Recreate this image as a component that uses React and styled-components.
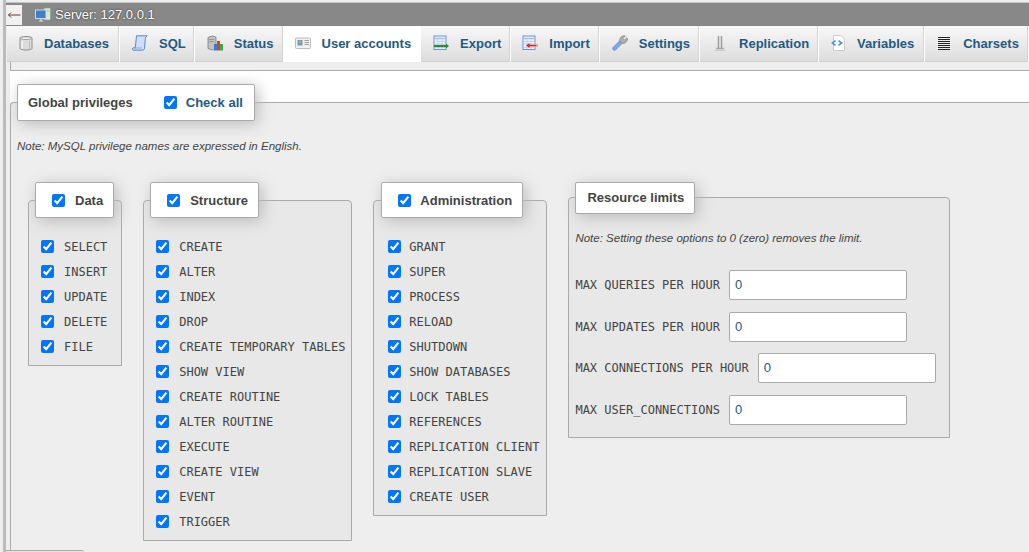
import React from "react";
import styled, { createGlobalStyle } from "styled-components";

const Global = createGlobalStyle`
  html, body { margin: 0; padding: 0; background: #eee; }
  body { font-family: "Liberation Sans", Arial, sans-serif; font-size: 13px; color: #444; overflow: hidden; }
  * { box-sizing: border-box; }
`;

const Page = styled.div`
  margin-left: 3px;
  border-left: 3px solid #bbb;
  height: 552px;
  overflow: hidden;
  padding-top: 3px;
  background: #eee;
`;

const ServerBar = styled.div`
  height: 23px;
  background: #888;
  box-shadow: 0 -1px 0 #c4c4c4;
  display: flex;
  align-items: center;
  color: #fff;
  font-size: 13px;
  text-shadow: 0 0 2px #222;
`;

const BackButton = styled.div`
  display: flex;
  align-items: center;
  justify-content: center;
  width: 16px;
  height: 20px;
  background: #f0f0f0;
  margin-right: 13px;
`;

const ServerLabel = styled.span`
  margin-left: 4px;
`;

const TabBar = styled.nav`
  height: 36px;
  display: flex;
  padding-left: 1px;
  background: #eee;
`;

const Tab = styled.a`
  display: flex;
  align-items: center;
  height: 36px;
  gap: 11px;
  padding: 0 ${p => p.$pr}px 2px ${p => p.$pl}px;
  font-weight: bold;
  font-size: 13px;
  color: #235a81;
  border-right: 1px solid #fff;
  flex: ${p => (p.$last ? "1" : "0 0 auto")};
  white-space: nowrap;
  background: ${p => (p.$active ? "#fff" : "linear-gradient(#f8f8f8, #dcdcdc)")};
  box-shadow: ${p => (p.$active ? "none" : "inset -1px 0 0 #d4d4d4, inset 0 -1px 0 #d0d0d0")};
`;

const Content = styled.div`
  padding-left: 4px;
`;

const TabStrip = styled.div`
  height: 9px;
  border-left: 1px solid #aaa;
  border-bottom: 1px solid #aaa;
`;

const WhiteBand = styled.div`
  height: 31px;
  background: #fff;
`;

const MainFieldset = styled.section`
  height: 448px;
  border-top: 1px solid #aaa;
  border-left: 1px solid #aaa;
  border-top-left-radius: 4px;
  background: #eee;
  padding-left: 6px;
`;

const LegendBox = styled.div`
  display: flex;
  width: fit-content;
  align-items: center;
  background: #fff;
  border: 1px solid #aaa;
  border-radius: 2px;
  box-shadow: 3px 3px 15px #bbb;
  font-weight: bold;
  font-size: 13px;
  color: #444;
  white-space: nowrap;
`;

const MainLegend = styled(LegendBox)`
  height: 37px;
  margin-top: -19px;
  padding: 0 11px 0 10px;
`;

const CheckAll = styled.label`
  display: flex;
  align-items: center;
  gap: 9px;
  margin-left: 31px;
  color: #235a81;
`;

const Check = styled.input.attrs({ type: "checkbox", defaultChecked: true })`
  width: 13px;
  height: 13px;
  margin: 0;
  flex: none;
`;

const Note = styled.p`
  margin: ${p => p.$top}px 0 0;
  font-style: italic;
  font-size: 11.5px;
  line-height: 13px;
  color: #444;
  white-space: nowrap;
`;

const Groups = styled.div`
  display: flex;
  align-items: flex-start;
  gap: 21px;
  margin: 47px 0 0 11px;
`;

const Group = styled.div`
  border: 1px solid #aaa;
  border-radius: 4px 4px 0 0;
  background: #e8e8e8;
  display: flex;
  flex-direction: column;
  align-items: flex-start;
  padding: 0 ${p => (p.$wide ? 7 : 6)}px 6px ${p => (p.$wide ? 14 : 12)}px;
`;

const GroupLegend = styled(LegendBox)`
  height: 36px;
  margin: -19px 1px 16px ${p => (p.$wide ? -7 : -6)}px;
  padding: 0 10px 0 16px;
  gap: ${p => (p.$wide ? 9 : 10)}px;
`;

const Row = styled.label`
  display: flex;
  align-items: center;
  height: 25px;
  gap: ${p => (p.$wide ? 8 : 10)}px;
  font-family: "DejaVu Sans Mono", monospace;
  font-size: 12px;
  color: #444;
  white-space: nowrap;
`;

const ResourceBox = styled.div`
  width: 382px;
  height: 241px;
  margin-top: -3px;
  border: 1px solid #aaa;
  border-radius: 4px 4px 0 0;
  background: #e8e8e8;
  padding: 0 6px 0 7px;
`;

const ResourceLegend = styled(LegendBox)`
  height: 32px;
  margin: -16px 0 0 -1px;
  padding: 0 10px 1px 11px;
`;

const Limits = styled.div`
  display: flex;
  flex-direction: column;
  gap: 11.67px;
  margin-top: 25px;
`;

const LimitRow = styled.label`
  display: flex;
  align-items: center;
  gap: 9px;
  height: 30px;
  font-family: "DejaVu Sans Mono", monospace;
  font-size: 12px;
  color: #444;
  white-space: nowrap;
  margin-left: -1px;
`;

const ResourceNote = styled(Note)`
  margin-left: -1px;
`;

const NumberInput = styled.input.attrs({ type: "text", defaultValue: "0" })`
  width: 178px;
  height: 30px;
  border: 1px solid #aaa;
  border-radius: 2px;
  background: #fff;
  padding: 0 5px 1px;
  font-family: "Liberation Sans", Arial, sans-serif;
  font-size: 13px;
  color: #235a81;
  outline: none;
`;

const FooterTab = styled.div`
  width: 78px;
  height: 8px;
  margin-left: -4px;
  border-top: 1px solid #aaa;
  border-right: 1px solid #ccc;
  border-top-right-radius: 2px;
  background: #e4e4e4;
`;

const Ico = styled.svg`
  width: 16px;
  height: 16px;
  flex: none;
  display: block;
`;

const icons = {
  db: (
    <>
      <path d="M3 3C3 1 15 1 15 3V13.500C15 15.500 3 15.500 3 13.500Z" fill="#dcdcdc" stroke="#8e8e8e" />
      <path d="M3 3c0 2 12 2 12 0" fill="#f2f2f2" stroke="#a0a0a0" />
      <path d="M5 6v7.500" stroke="#f4f4f4" strokeWidth="1.500" />
      <path d="M12.500 6v8" stroke="#c0c0c0" />
    </>
  ),
  sql: (
    <>
      <path d="M4.500 .8H15.200L13.500 2.500 12.500 13c-.2 1.500-1 2.200-2 2.200H1.500c-1.200 0-1.400-2-.3-2.400H3.300Z" fill="#cfe0f6" stroke="#4a7cc0" strokeWidth=".9" />
      <path d="M2 13h7.800" stroke="#7ea6dc" />
    </>
  ),
  status: (
    <>
      <path d="M1 2.500 5.500 .8 9 2.200v11.500L5.500 15 1 13.500Z" fill="#c2c2c2" stroke="#7c7c7c" strokeWidth=".8" />
      <path d="M2 4.500h5M2 6.500h5" stroke="#8c8c8c" strokeWidth=".8" />
      <rect x="7" y="9" width="3" height="6.500" fill="#2f7fd8" />
      <rect x="10" y="6" width="3" height="9.500" fill="#d8402f" />
      <rect x="13" y="9" width="3" height="6.500" fill="#3ea83e" />
    </>
  ),
  user: (
    <>
      <rect x=".5" y="3" width="15" height="10.500" rx="1" fill="#f1f1f1" stroke="#bcbcbc" />
      <rect x="2.500" y="5" width="5" height="5.500" fill="#5b9bdc" />
      <circle cx="5" cy="7" r="1.400" fill="#e8a040" />
      <path d="M9.500 5.500h4.500M9.500 7.500h4.500M9.500 9.500h4.500" stroke="#a0a0a0" />
    </>
  ),
  export: (
    <>
      <rect x="1" y="1" width="12" height="13.500" fill="#eef3fb" stroke="#6d94cf" />
      <path d="M1 3.500h12" stroke="#a6c0e6" strokeWidth="1.500" />
      <path d="M1 6.500h12M1 9h12M1 12.500h12M5 4v10M9 4v10" stroke="#b4c8e6" strokeWidth=".7" />
      <path d="M1 11h13" stroke="#2f8a2f" strokeWidth="2.200" />
      <path d="M13 8.500 16 11l-3 2.500Z" fill="#2f8a2f" />
    </>
  ),
  import: (
    <>
      <rect x="1" y="1" width="12" height="13.500" fill="#eef3fb" stroke="#6d94cf" />
      <path d="M1 3.500h12" stroke="#a6c0e6" strokeWidth="1.500" />
      <path d="M1 6.500h12M1 9h12M1 12.500h12M5 4v10M9 4v10" stroke="#b4c8e6" strokeWidth=".7" />
      <path d="M7 10.500h9" stroke="#f59a9a" strokeWidth="2.800" />
      <path d="M7 10.500h7" stroke="#e02020" strokeWidth="1" />
      <path d="M7.500 8 4 10.500 7.500 13Z" fill="#e02020" />
    </>
  ),
  settings: (
    <>
      <path d="M1 12.500 8 5.500l2.500 2.500-7 7c-1.700 1.100-3.600-.900-2.500-2.500Z" fill="#80a8e0" stroke="#5a83bd" strokeWidth=".7" />
      <path d="M8 6.500c-.9-3 1.200-6 4.500-5.800l.8.400L11 3.500 12.500 5 15 2.800l.4.800c.2 3-2.400 5.500-5.400 4.600Z" fill="#b0b0b0" stroke="#808080" strokeWidth=".7" />
    </>
  ),
  replication: (
    <>
      <path d="M6.500 1v12M9.500 1v12" stroke="#9a9a9a" strokeWidth="1.500" />
      <path d="M8 1.500v11.500" stroke="#dcdcdc" />
      <path d="M4 13.500h8" stroke="#a4a4a4" strokeWidth="1.500" />
      <path d="M2.500 15.500h11" stroke="#c8c8c8" />
    </>
  ),
  variables: (
    <>
      <path d="M3.500 .5h7.500l3.500 3.500v11.500h-11Z" fill="#fff" stroke="#ccc" />
      <path d="M5 5 1 8l4 3 1-1.300L3.800 8 6 6.300ZM9 5l4 3-4 3-1-1.300L10.200 8 8 6.300Z" fill="#4a96e8" />
    </>
  ),
  charsets: (
    <path d="M2 2.500h12M2 4.500h12M2 6.500h12M2 8.500h12M2 10.500h12M2 12.500h12M2 14.500h12" stroke="#222" strokeWidth="1" />
  ),
};

const tabs = [
  { icon: "db", label: "Databases", pl: 10, pr: 10 },
  { icon: "sql", label: "SQL", pr: 8 },
  { icon: "status", label: "Status", pr: 9 },
  { icon: "user", label: "User accounts", pl: 11, pr: 9, active: true },
  { icon: "export", label: "Export", pr: 9 },
  { icon: "import", label: "Import", pl: 11, pr: 9 },
  { icon: "settings", label: "Settings", pr: 9 },
  { icon: "replication", label: "Replication", pr: 9 },
  { icon: "variables", label: "Variables", pl: 11, pr: 10 },
  { icon: "charsets", label: "Charsets", pl: 11, pr: 9 },
];

const data = ["SELECT", "INSERT", "UPDATE", "DELETE", "FILE"];
const structure = ["CREATE", "ALTER", "INDEX", "DROP", "CREATE TEMPORARY TABLES", "SHOW VIEW", "CREATE ROUTINE", "ALTER ROUTINE", "EXECUTE", "CREATE VIEW", "EVENT", "TRIGGER"];
const admin = ["GRANT", "SUPER", "PROCESS", "RELOAD", "SHUTDOWN", "SHOW DATABASES", "LOCK TABLES", "REFERENCES", "REPLICATION CLIENT", "REPLICATION SLAVE", "CREATE USER"];
const limits = ["MAX QUERIES PER HOUR", "MAX UPDATES PER HOUR", "MAX CONNECTIONS PER HOUR", "MAX USER_CONNECTIONS"];

const PrivGroup = ({ title, items, wide }) => (
  <Group $wide={wide}>
    <GroupLegend $wide={wide}>
      <Check />
      {title}
    </GroupLegend>
    {items.map(item => (
      <Row key={item} $wide={wide}>
        <Check />
        {item}
      </Row>
    ))}
  </Group>
);

export default function App() {
  return (
    <>
      <Global />
      <Page>
        <ServerBar>
          <BackButton>
            <svg width="14" height="8" viewBox="0 0 14 8">
              <path d="M1.500 4H13.500" stroke="#6a3a3a" strokeWidth="1" fill="none" />
              <path d="M4 1.500 1.500 4 4 6.500" stroke="#6a3a3a" strokeWidth="1" fill="none" />
            </svg>
          </BackButton>
          <Ico viewBox="0 0 16 16">
            <rect x="9" y="1" width="6.500" height="12" fill="#dfe6dc" stroke="#8a9a8a" strokeWidth=".7" />
            <rect x=".5" y="3" width="10.500" height="8.500" fill="#3f7fc4" stroke="#cfd8e4" />
            <path d="M4 14h4M6 11.500V14" stroke="#dde" strokeWidth="1.200" />
            <circle cx="13" cy="4" r=".8" fill="#5c5" />
          </Ico>
          <ServerLabel>Server: 127.0.0.1</ServerLabel>
        </ServerBar>
        <TabBar>
          {tabs.map(({ icon, label, pl = 12, pr, active }, i) => (
            <Tab key={label} $active={active} $pl={pl} $pr={pr} $last={i === tabs.length - 1}>
              <Ico viewBox="0 0 16 16">{icons[icon]}</Ico>
              {label}
            </Tab>
          ))}
        </TabBar>
        <Content>
          <TabStrip />
          <WhiteBand />
          <MainFieldset>
            <MainLegend>
              Global privileges
              <CheckAll>
                <Check />
                Check all
              </CheckAll>
            </MainLegend>
            <Note $top={19}>Note: MySQL privilege names are expressed in English.</Note>
            <Groups>
              <PrivGroup title="Data" items={data} />
              <PrivGroup title="Structure" items={structure} />
              <PrivGroup title="Administration" items={admin} wide />
              <ResourceBox>
                <ResourceLegend>Resource limits</ResourceLegend>
                <ResourceNote $top={18}>Note: Setting these options to 0 (zero) removes the limit.</ResourceNote>
                <Limits>
                  {limits.map(label => (
                    <LimitRow key={label}>
                      {label}
                      <NumberInput />
                    </LimitRow>
                  ))}
                </Limits>
              </ResourceBox>
            </Groups>
          </MainFieldset>
          <FooterTab />
        </Content>
      </Page>
    </>
  );
}
